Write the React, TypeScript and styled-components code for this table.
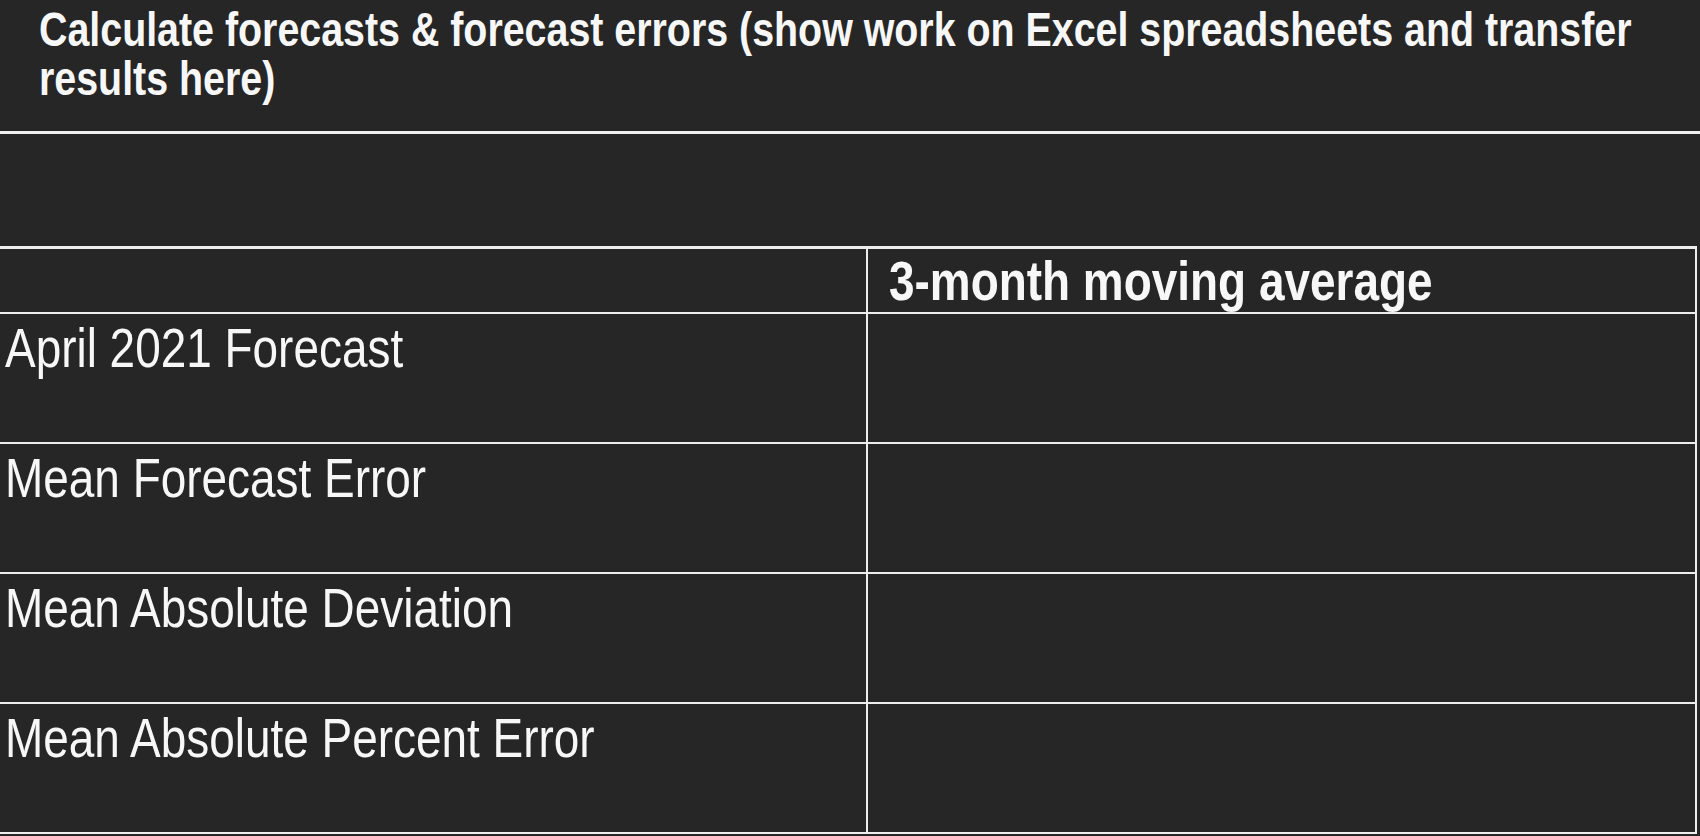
import styled, { createGlobalStyle } from 'styled-components'

const GlobalStyle = createGlobalStyle`
  html, body {
    margin: 0;
    padding: 0;
    background: #262626;
  }
  body {
    width: 1700px;
    height: 836px;
    overflow: hidden;
    font-family: "Liberation Sans", Arial, sans-serif;
    color: #f7f7f7;
  }
`

const ROWS = [
  'April 2021 Forecast',
  'Mean Forecast Error',
  'Mean Absolute Deviation',
  'Mean Absolute Percent Error'
]

const App = () => {
  return (
    <Page>
      <GlobalStyle />
      <Header>
        <Title>
          Calculate forecasts &amp; forecast errors (show work on Excel spreadsheets and transfer
          results here)
        </Title>
      </Header>
      <Spacer />
      <ResultTable>
        <colgroup>
          <LabelCol />
          <col />
        </colgroup>
        <tbody>
          <tr>
            <HeadCell />
            <HeadCell>
              <Narrow>3-month moving average</Narrow>
            </HeadCell>
          </tr>
          {ROWS.map(label => (
            <tr key={label}>
              <LabelCell>
                <Narrow>{label}</Narrow>
              </LabelCell>
              <ValueCell />
            </tr>
          ))}
        </tbody>
      </ResultTable>
    </Page>
  )
}

export default App

// Arial Narrow is not around, so the regular face is squeezed to its width
const SQUEEZE = 0.82

const Page = styled.div`
  width: 1700px;
  height: 836px;
  background: #262626;
`

const Header = styled.div`
  padding: 5px 0 28px 39px;
  border-bottom: 3px solid #f0f0f0;
`

const Title = styled.h1`
  margin: 0;
  width: 2000px;
  font-size: 48px;
  line-height: 49px;
  font-weight: 700;
  color: #f7f7f7;
  transform: scaleX(${SQUEEZE});
  transform-origin: left top;
`

const Spacer = styled.div`
  height: 112px;
`

const ResultTable = styled.table`
  width: 1697px;
  border-collapse: collapse;
  table-layout: fixed;

  td {
    border: 2px solid #ededed;
    padding: 0;
    vertical-align: top;
    white-space: nowrap;
    overflow: hidden;
  }

  td:first-child {
    border-left: none;
  }

  tr:first-child td {
    border-top-width: 3px;
  }
`

const LabelCol = styled.col`
  width: 867px;
`

const Narrow = styled.span`
  display: inline-block;
  transform: scaleX(${SQUEEZE});
  transform-origin: left top;
`

const HeadCell = styled.td`
  height: 63px;
  padding-left: 21px !important;
  font-size: 56px;
  line-height: 63px;
  font-weight: 700;
`

const LabelCell = styled.td`
  height: 126px;
  padding: 2px 0 0 5px !important;
  font-size: 56px;
  line-height: 64px;
  font-weight: 400;
`

const ValueCell = styled.td`
  height: 126px;
`
